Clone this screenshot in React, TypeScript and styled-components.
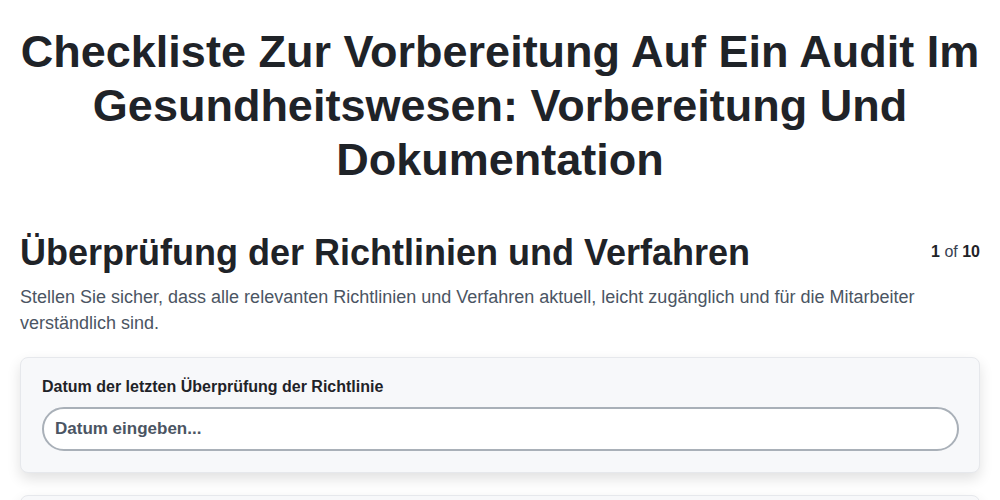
import { createGlobalStyle } from "styled-components"
import styled from "styled-components"

const GlobalStyle = createGlobalStyle`
  * {
    box-sizing: border-box;
  }

  body {
    margin: 0;
    background: #ffffff;
    font-family: "Liberation Sans", Arial, sans-serif;
    color: #1f2328;
  }
`

const Page = styled.div`
  padding: 25px 20px 20px;
`

const Title = styled.h1`
  margin: 0 0 44px;
  text-align: center;
  font-size: 45px;
  line-height: 54px;
  font-weight: 700;
  color: #1f2328;
`

const StepHeader = styled.div`
  display: flex;
  justify-content: space-between;
  align-items: flex-start;
  gap: 16px;
`

const StepTitle = styled.h2`
  margin: 0;
  font-size: 36px;
  line-height: 44px;
  font-weight: 700;
  color: #1f2328;
`

const Counter = styled.div`
  padding-top: 12px;
  font-size: 16px;
  color: #374151;
  white-space: nowrap;

  b {
    color: #1f2328;
  }
`

const Description = styled.p`
  margin: 9px 0 21px;
  font-size: 18px;
  line-height: 26px;
  color: #4b5563;
`

const Card = styled.div`
  background: #f7f8fa;
  border: 1px solid #e6e8ec;
  border-radius: 8px;
  box-shadow: 0 6px 14px rgba(0, 0, 0, 0.12);
  padding: 20px 20px 21px 21px;
  margin-bottom: 22px;
`

const Label = styled.label`
  display: block;
  font-size: 16px;
  line-height: 18px;
  font-weight: 700;
  color: #1f2328;
  margin-bottom: 11px;
`

const Input = styled.input`
  display: block;
  width: 100%;
  height: 44px;
  border: 2px solid #a9b0b8;
  border-radius: 22px;
  background: #ffffff;
  padding: 0 11px;
  font-family: "Liberation Sans", Arial, sans-serif;
  font-size: 17px;
  font-weight: 700;
  color: #1f2328;
  outline: none;

  &::placeholder {
    color: #4b5563;
    opacity: 1;
  }
`

export default function App() {
  return (
    <>
      <GlobalStyle />
      <Page>
        <Title>
          Checkliste Zur Vorbereitung Auf Ein Audit Im Gesundheitswesen: Vorbereitung Und
          Dokumentation
        </Title>

        <StepHeader>
          <StepTitle>Überprüfung der Richtlinien und Verfahren</StepTitle>
          <Counter>
            <b>1</b> of <b>10</b>
          </Counter>
        </StepHeader>

        <Description>
          Stellen Sie sicher, dass alle relevanten Richtlinien und Verfahren aktuell, leicht
          zugänglich und für die Mitarbeiter verständlich sind.
        </Description>

        <Card>
          <Label htmlFor="datum">Datum der letzten Überprüfung der Richtlinie</Label>
          <Input id="datum" placeholder="Datum eingeben..." />
        </Card>

        <Card>
          <Label htmlFor="verantwortlich">Verantwortliche Person</Label>
          <Input id="verantwortlich" placeholder="Name eingeben..." />
        </Card>
      </Page>
    </>
  )
}
